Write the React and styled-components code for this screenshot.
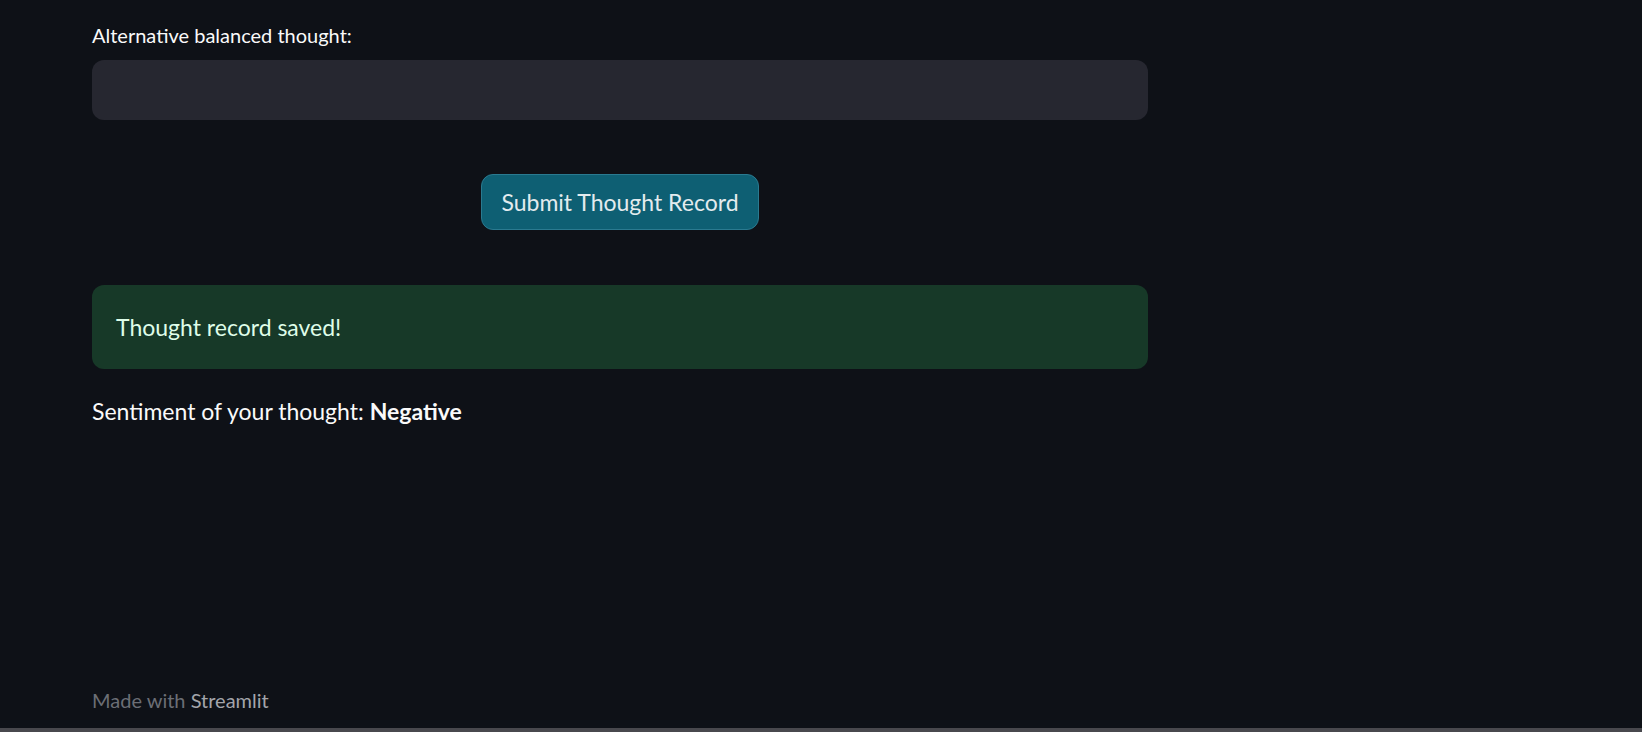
import styled, { createGlobalStyle } from "styled-components";

const GlobalStyle = createGlobalStyle`
  html, body {
    margin: 0;
    padding: 0;
    background: #0e1117;
  }
  body {
    font-family: Lato, "Noto Sans", sans-serif;
    color: #fafafa;
  }
`;

const Page = styled.div`
  display: flex;
  flex-direction: column;
  height: 100vh;
  box-sizing: border-box;
  overflow: hidden;
`;

const Main = styled.main`
  display: flex;
  flex-direction: column;
  width: 1056px;
  margin-left: 92px;
  padding-top: 19px;
  flex: 1;
`;

const Label = styled.label`
  display: block;
  font-size: 20px;
  line-height: 32px;
  height: 32px;
  margin-bottom: 9px;
  color: #fafafa;
`;

const InputBox = styled.div`
  height: 60px;
  border-radius: 12px;
  background: #262730;
`;

const ButtonRow = styled.div`
  display: flex;
  justify-content: center;
  margin-top: 54px;
`;

const Button = styled.button`
  height: 56px;
  padding: 0 19px;
  border-radius: 12px;
  border: 1px solid #2a7a90;
  background: #0e5f73;
  color: #e3ebee;
  font-family: inherit;
  font-size: 23px;
  cursor: pointer;
`;

const Alert = styled.div`
  margin-top: 55px;
  height: 84px;
  box-sizing: border-box;
  padding: 24px;
  border-radius: 12px;
  background: #173928;
  color: #dffde9;
  font-size: 23px;
  line-height: 36px;
`;

const Sentiment = styled.p`
  margin: 24px 0 0;
  font-size: 23px;
  line-height: 36px;
  color: #fafafa;

  strong {
    font-weight: 700;
  }
`;

const Footer = styled.footer`
  margin-left: 92px;
  padding-bottom: 12px;
  font-size: 20px;
  line-height: 32px;
  color: #6b6e75;

  span {
    color: #a3a5ab;
  }
`;

const BottomBar = styled.div`
  height: 4px;
  background: #48484d;
`;

export default function App() {
  return (
    <>
      <GlobalStyle />
      <Page>
        <Main>
          <Label>Alternative balanced thought:</Label>
          <InputBox />
          <ButtonRow>
            <Button>Submit Thought Record</Button>
          </ButtonRow>
          <Alert>Thought record saved!</Alert>
          <Sentiment>
            Sentiment of your thought: <strong>Negative</strong>
          </Sentiment>
        </Main>
        <Footer>
          Made with <span>Streamlit</span>
        </Footer>
        <BottomBar />
      </Page>
    </>
  );
}
